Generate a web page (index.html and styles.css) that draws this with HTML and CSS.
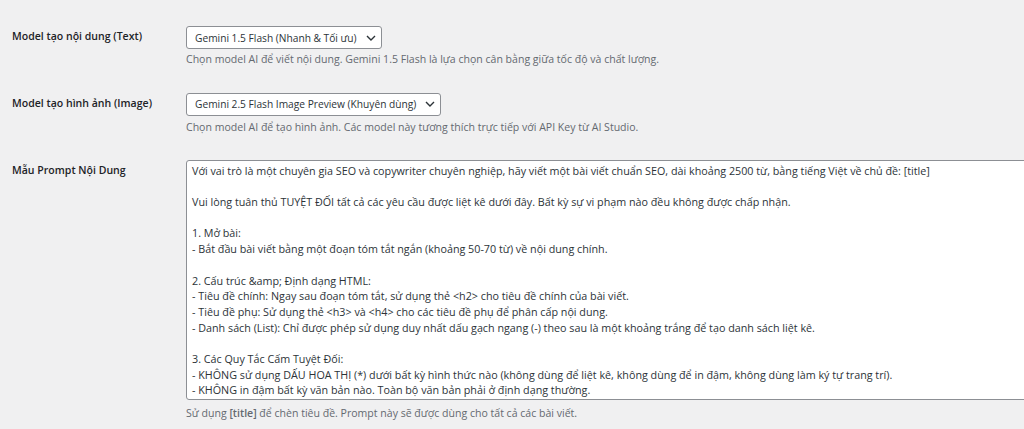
FILE: index.html
```html
<!DOCTYPE html>
<html lang="vi">
<head>
<meta charset="utf-8">
<title>Cài đặt</title>
<link rel="stylesheet" href="styles.css">
</head>
<body>
<div class="form-table">
  <div class="row">
    <div class="th">Model tạo nội dung (Text)</div>
    <div class="td">
      <div class="select">
        <span class="select-text">Gemini 1.5 Flash (Nhanh &amp; Tối ưu)</span>
        <svg class="chev" width="10" height="6" viewBox="0 0 10 6"><path d="M1 1 L5 5 L9 1" fill="none" stroke="#2c3338" stroke-width="1.4"/></svg>
      </div>
      <p class="description">Chọn model AI để viết nội dung. Gemini 1.5 Flash là lựa chọn cân bằng giữa tốc độ và chất lượng.</p>
    </div>
  </div>
  <div class="row">
    <div class="th">Model tạo hình ảnh (Image)</div>
    <div class="td">
      <div class="select">
        <span class="select-text">Gemini 2.5 Flash Image Preview (Khuyên dùng)</span>
        <svg class="chev" width="10" height="6" viewBox="0 0 10 6"><path d="M1 1 L5 5 L9 1" fill="none" stroke="#2c3338" stroke-width="1.4"/></svg>
      </div>
      <p class="description desc-lower">Chọn model AI để tạo hình ảnh. Các model này tương thích trực tiếp với API Key từ AI Studio.</p>
    </div>
  </div>
  <div class="row">
    <div class="th">Mẫu Prompt Nội Dung</div>
    <div class="td">
      <textarea class="large-text" readonly>Với vai trò là một chuyên gia SEO và copywriter chuyên nghiệp, hãy viết một bài viết chuẩn SEO, dài khoảng 2500 từ, bằng tiếng Việt về chủ đề: [title]

Vui lòng tuân thủ TUYỆT ĐỐI tất cả các yêu cầu được liệt kê dưới đây. Bất kỳ sự vi phạm nào đều không được chấp nhận.

1. Mở bài:
- Bắt đầu bài viết bằng một đoạn tóm tắt ngắn (khoảng 50-70 từ) về nội dung chính.

2. Cấu trúc &amp;amp; Định dạng HTML:
- Tiêu đề chính: Ngay sau đoạn tóm tắt, sử dụng thẻ &lt;h2&gt; cho tiêu đề chính của bài viết.
- Tiêu đề phụ: Sử dụng thẻ &lt;h3&gt; và &lt;h4&gt; cho các tiêu đề phụ để phân cấp nội dung.
- Danh sách (List): Chỉ được phép sử dụng duy nhất dấu gạch ngang (-) theo sau là một khoảng trắng để tạo danh sách liệt kê.

3. Các Quy Tắc Cấm Tuyệt Đối:
- KHÔNG sử dụng DẤU HOA THỊ (*) dưới bất kỳ hình thức nào (không dùng để liệt kê, không dùng để in đậm, không dùng làm ký tự trang trí).
- KHÔNG in đậm bất kỳ văn bản nào. Toàn bộ văn bản phải ở định dạng thường.
- KHÔNG sử dụng thẻ &lt;h1&gt;.</textarea>
      <p class="description after-textarea">Sử dụng <strong>[title]</strong> để chèn tiêu đề. Prompt này sẽ được dùng cho tất cả các bài viết.</p>
    </div>
  </div>
</div>
</body>
</html>
```
FILE: styles.css
```css
html, body {
  margin: 0;
  padding: 0;
  background: #f0f0f1;
  overflow: hidden;
}
body {
  font-family: "Open Sans", "Noto Sans", sans-serif;
  color: #1d2327;
  font-size: 11px;
}
.form-table {
  padding: 13px 0 0 12px;
}
.row {
  display: grid;
  grid-template-columns: 174px 1fr;
}
.th {
  padding: 17px 0 16px 0;
  font-weight: 600;
  font-size: 10.55px;
  line-height: 1.3;
  color: #1d2327;
}
.td {
  padding: 13px 0 12px;
  min-width: 0;
}
.select {
  display: inline-flex;
  align-items: center;
  height: 23px;
  box-sizing: border-box;
  border: 1px solid #8c8f94;
  border-radius: 3px;
  background: #fff;
  padding: 0 5px 0 8px;
  gap: 9px;
  color: #2c3338;
  font-size: 10.2px;
}
.chev {
  display: block;
}
.description {
  margin: 3px 0 0;
  font-size: 10.55px;
  line-height: 1.5;
  color: #646970;
}
.description.desc-lower {
  margin-top: 4px;
  margin-bottom: -1px;
}
.description.after-textarea {
  margin-top: 6px;
}
.description strong {
  font-weight: 600;
}
textarea.large-text {
  display: block;
  width: 860px;
  height: 240px;
  box-sizing: border-box;
  margin: 0;
  padding: 2px 5px;
  border: 1px solid #8c8f94;
  border-radius: 3px;
  background: #fff;
  color: #2c3338;
  font-family: "Open Sans", "Noto Sans", sans-serif;
  font-size: 10.76px;
  line-height: 15.7px;
  resize: none;
  overflow: hidden;
  white-space: pre;
}
```
